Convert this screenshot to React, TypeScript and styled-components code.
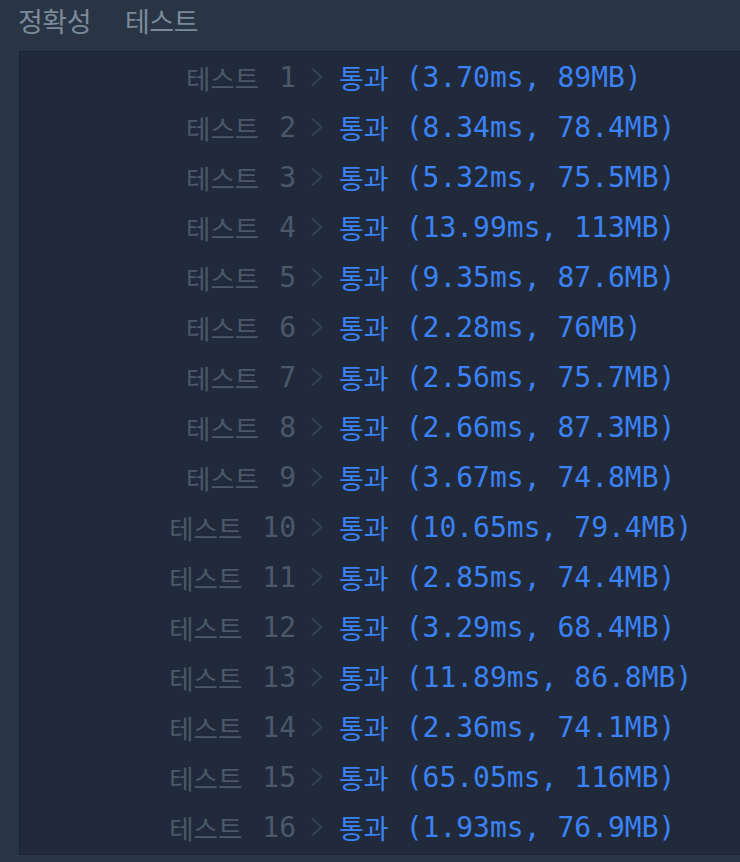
import React from "react";
import styled, { createGlobalStyle } from "styled-components";

const results = [
    { no: 1, time: "3.70ms", mem: "89MB" },
    { no: 2, time: "8.34ms", mem: "78.4MB" },
    { no: 3, time: "5.32ms", mem: "75.5MB" },
    { no: 4, time: "13.99ms", mem: "113MB" },
    { no: 5, time: "9.35ms", mem: "87.6MB" },
    { no: 6, time: "2.28ms", mem: "76MB" },
    { no: 7, time: "2.56ms", mem: "75.7MB" },
    { no: 8, time: "2.66ms", mem: "87.3MB" },
    { no: 9, time: "3.67ms", mem: "74.8MB" },
    { no: 10, time: "10.65ms", mem: "79.4MB" },
    { no: 11, time: "2.85ms", mem: "74.4MB" },
    { no: 12, time: "3.29ms", mem: "68.4MB" },
    { no: 13, time: "11.89ms", mem: "86.8MB" },
    { no: 14, time: "2.36ms", mem: "74.1MB" },
    { no: 15, time: "65.05ms", mem: "116MB" },
    { no: 16, time: "1.93ms", mem: "76.9MB" },
];

const GlobalStyle = createGlobalStyle`
    html, body {
        margin: 0;
        padding: 0;
        background: #293545;
    }
    body {
        font-family: "Noto Sans CJK KR", "Noto Sans", sans-serif;
    }
`;

const Chevron: React.FunctionComponent = () => (
    <svg width="12" height="18" viewBox="0 0 12 18" fill="none">
        <path d="M1.5 1 L10.5 9 L1.5 17" stroke="#364353" strokeWidth="1.7" strokeLinecap="round" strokeLinejoin="round" />
    </svg>
);

export default function App() {
    return (
        <Page>
            <GlobalStyle />
            <Header>
                <Title>정확성</Title>
                <Title>테스트</Title>
            </Header>
            <Panel>
                {results.map(r => (
                    <Row key={r.no}>
                        <Label>
                            테스트<Num>{r.no}</Num>
                        </Label>
                        <Arrow>
                            <Chevron />
                        </Arrow>
                        <Status>통과</Status>
                        <Result>({r.time}, {r.mem})</Result>
                    </Row>
                ))}
            </Panel>
        </Page>
    );
}

const Page = styled.div`
    width: 740px;
    height: 862px;
    display: flex;
    flex-direction: column;
    overflow: hidden;
    background: #293545;
`;

const Header = styled.div`
    height: 51px;
    display: flex;
    align-items: center;
    gap: 34px;
    padding: 0 0 10px 18px;
    box-sizing: border-box;
`;

const Title = styled.span`
    font-family: "Noto Sans CJK KR", sans-serif;
    font-size: 27px;
    color: #7b8a98;
    letter-spacing: -0.5px;
`;

const Panel = styled.div`
    margin-left: 19px;
    height: 804px;
    box-sizing: border-box;
    background: #212a3a;
    border: 1px solid #1b2332;
    border-right: none;
    display: flex;
    flex-direction: column;
`;

const Row = styled.div`
    height: 50px;
    display: flex;
    align-items: center;
`;

const Label = styled.div`
    width: 276px;
    display: flex;
    align-items: center;
    justify-content: flex-end;
    font-family: "Noto Sans CJK KR", sans-serif;
    font-size: 26.5px;
    color: #4b5869;
`;

const Num = styled.span`
    font-family: "DejaVu Sans Mono", monospace;
    font-size: 28px;
    margin-left: 20px;
`;

const Arrow = styled.span`
    display: flex;
    margin-left: 15px;
`;

const Status = styled.span`
    margin-left: 16px;
    font-family: "Noto Sans CJK KR", sans-serif;
    font-size: 27px;
    color: #3b82f6;
`;

const Result = styled.span`
    margin-left: 17px;
    font-family: "DejaVu Sans Mono", monospace;
    font-size: 28px;
    color: #3b82f6;
    white-space: pre;
`;
